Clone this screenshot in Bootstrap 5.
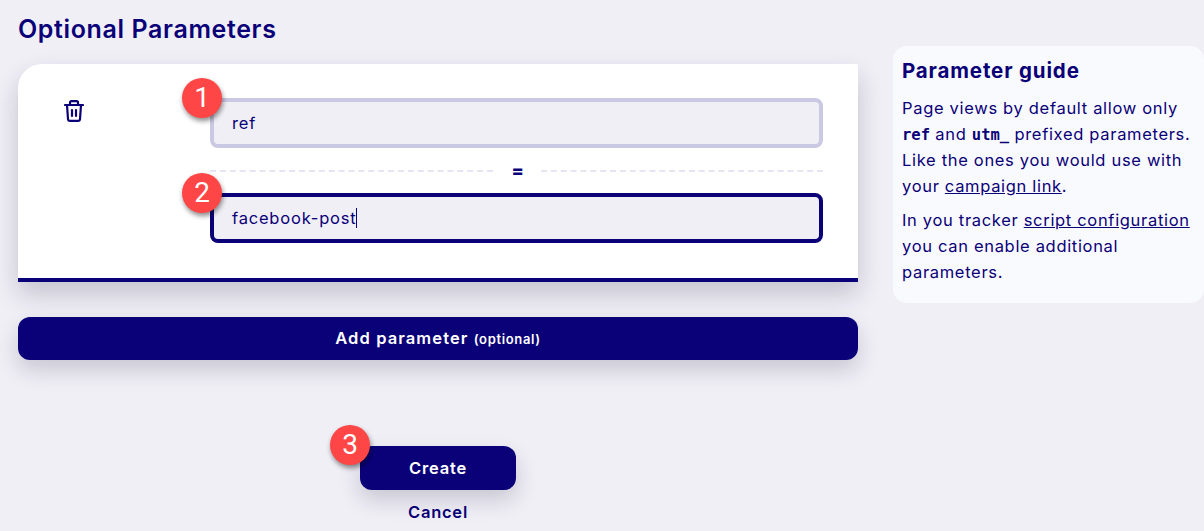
<!DOCTYPE html>
<html lang="en">
<head>
    <meta charset="UTF-8" />
    <meta name="viewport" content="width=device-width, initial-scale=1.0"/>
    <title>Optional Parameters</title>
    <link href="https://cdn.jsdelivr.net/npm/bootstrap@5.3.2/dist/css/bootstrap.min.css" rel="stylesheet">
    <style>
        html, body {
          height: 531px;
          overflow: hidden;
        }
        body {
          background-color: #f0eff6;
          color: #0a0078;
          font-family: Inter, "Noto Sans", sans-serif;
        }
        .page-wrap {
          padding: 0 0 0 18px;
          gap: 35px;
        }
        .main-col {
          width: 840px;
          flex: none;
        }
        .page-title {
          font-size: 25px;
          font-weight: 600;
          line-height: 30px;
          letter-spacing: .63px;
          margin: 14px 0 20px;
          color: #0a0078;
        }
        .param-card {
          border: 0;
          border-bottom: 4px solid #0a0078;
          border-radius: 24px 0 0 0;
          box-shadow: 0 12px 26px rgba(20, 20, 50, .2);
          padding: 34px 35px 35px 0;
        }
        .trash-col {
          width: 192px;
          padding: 2px 0 0 46px;
          flex: none;
        }
        .param-input {
          position: relative;
          height: 50px;
          border: 4px solid #cac8e2;
          border-radius: 8px;
          background-color: #f0eff6;
          color: #0a0078;
          font-size: 16.5px;
          line-height: 42px;
          padding: 0 18px;
          letter-spacing: .8px;
        }
        .param-input.is-focused {
          border-color: #0a0078;
        }
        .text-caret {
          display: inline-block;
          width: 1px;
          height: 20px;
          background: #0a0078;
          vertical-align: -4px;
        }
        .equals-row {
          height: 45px;
          gap: 19px;
          font-size: 18px;
          font-weight: 800;
        }
        .dash-line {
          flex: 1;
          border-top: 2px dashed #e6e5f3;
        }
        .equals-row .equals-sign {
          width: 10px;
          text-align: center;
          line-height: 1;
        }
        .navy-btn {
          background-color: #0a0078;
          border: 0;
          color: #fff;
          font-weight: 600;
          font-size: 16.5px;
          box-shadow: 0 10px 22px rgba(20, 20, 50, .18);
        }
        .navy-btn:hover {
          background-color: #0a0078;
          color: #fff;
        }
        .add-btn {
          height: 43px;
          margin-top: 35px;
          border-radius: 12px;
          letter-spacing: 1.1px;
        }
        .add-btn small {
          font-size: 13px;
          font-weight: 600;
          letter-spacing: .65px;
        }
        .create-btn {
          position: relative;
          width: 156px;
          height: 44px;
          margin-top: 86px;
          border-radius: 12px;
          letter-spacing: .8px;
        }
        .cancel-link {
          color: #0a0078;
          font-weight: 600;
          font-size: 16.5px;
          line-height: 22px;
          margin-top: 11px;
          text-decoration: none;
          letter-spacing: .75px;
        }
        .step-dot {
          position: absolute;
          width: 40px;
          height: 40px;
          border-radius: 50%;
          background: #ff4646;
          color: #fff;
          font-family: Roboto, "Liberation Sans", sans-serif;
          font-size: 28px;
          font-weight: 400;
          line-height: 40px;
          letter-spacing: 0;
          text-align: center;
          box-shadow: 1px 3px 5px rgba(0, 0, 0, .45);
          z-index: 2;
        }
        .param-input .step-dot {
          left: -32px;
          top: -24px;
        }
        .create-btn .step-dot {
          left: -30px;
          top: -21px;
        }
        .guide-box {
          flex: 1;
          height: 257px;
          margin-top: 46px;
          background: #f9fafd;
          border-radius: 14px;
          padding: 11px 8px 0 9px;
          font-size: 16.5px;
          line-height: 26px;
          letter-spacing: .68px;
        }
        .guide-box h2 {
          font-size: 20.5px;
          font-weight: 700;
          line-height: 28px;
          letter-spacing: .85px;
          margin: 0 0 10px;
          color: #0a0078;
        }
        .guide-box p {
          margin: 0 0 8px;
        }
        .guide-box a {
          color: #0a0078;
        }
        .guide-box code {
          font-family: "DejaVu Sans Mono", monospace;
          font-size: 15.5px;
          font-weight: 700;
          line-height: 1;
          letter-spacing: 0;
          color: #0a0078;
        }
    </style>
</head>
<body>

<div class="page-wrap d-flex">
    <div class="main-col d-flex flex-column">
        <h1 class="page-title">Optional Parameters</h1>

        <div class="card param-card flex-row">
            <div class="trash-col">
                <svg class="d-block" xmlns="http://www.w3.org/2000/svg" width="20" height="22" viewBox="0 0 20 22" fill="none" stroke="#0a0078" stroke-width="2.2" stroke-linecap="round" stroke-linejoin="round">
                    <path d="M1 5h18"></path>
                    <path d="M6 5V2.6a1.4 1.4 0 0 1 1.4-1.4h5.2a1.4 1.4 0 0 1 1.4 1.4V5"></path>
                    <path d="M3 5l1 14a2 2 0 0 0 2 1.9h8a2 2 0 0 0 2-1.9l1-14"></path>
                    <path d="M8 10v6"></path>
                    <path d="M12 10v6"></path>
                </svg>
            </div>
            <div class="flex-grow-1">
                <div class="param-input">
                    <span class="step-dot">1</span>
                    ref
                </div>
                <div class="equals-row d-flex align-items-center">
                    <span class="dash-line"></span>
                    <span class="equals-sign">=</span>
                    <span class="dash-line"></span>
                </div>
                <div class="param-input is-focused">
                    <span class="step-dot">2</span>
                    facebook-post<span class="text-caret"></span>
                </div>
            </div>
        </div>

        <button type="button" class="btn navy-btn add-btn w-100">Add parameter <small>(optional)</small></button>

        <div class="d-flex flex-column align-items-center">
            <button type="button" class="btn navy-btn create-btn">
                <span class="step-dot">3</span>
                Create
            </button>
            <a href="#" class="cancel-link">Cancel</a>
        </div>
    </div>

    <aside class="guide-box">
        <h2>Parameter guide</h2>
        <p>Page views by default allow only <code>ref</code> and <code>utm_</code> prefixed parameters. Like the ones you would use with your <a href="#">campaign link</a>.</p>
        <p>In you tracker <a href="#">script configuration</a> you can enable additional parameters.</p>
    </aside>
</div>

<script src="https://cdn.jsdelivr.net/npm/bootstrap@5.3.2/dist/js/bootstrap.bundle.min.js"></script>
</body>
</html>
